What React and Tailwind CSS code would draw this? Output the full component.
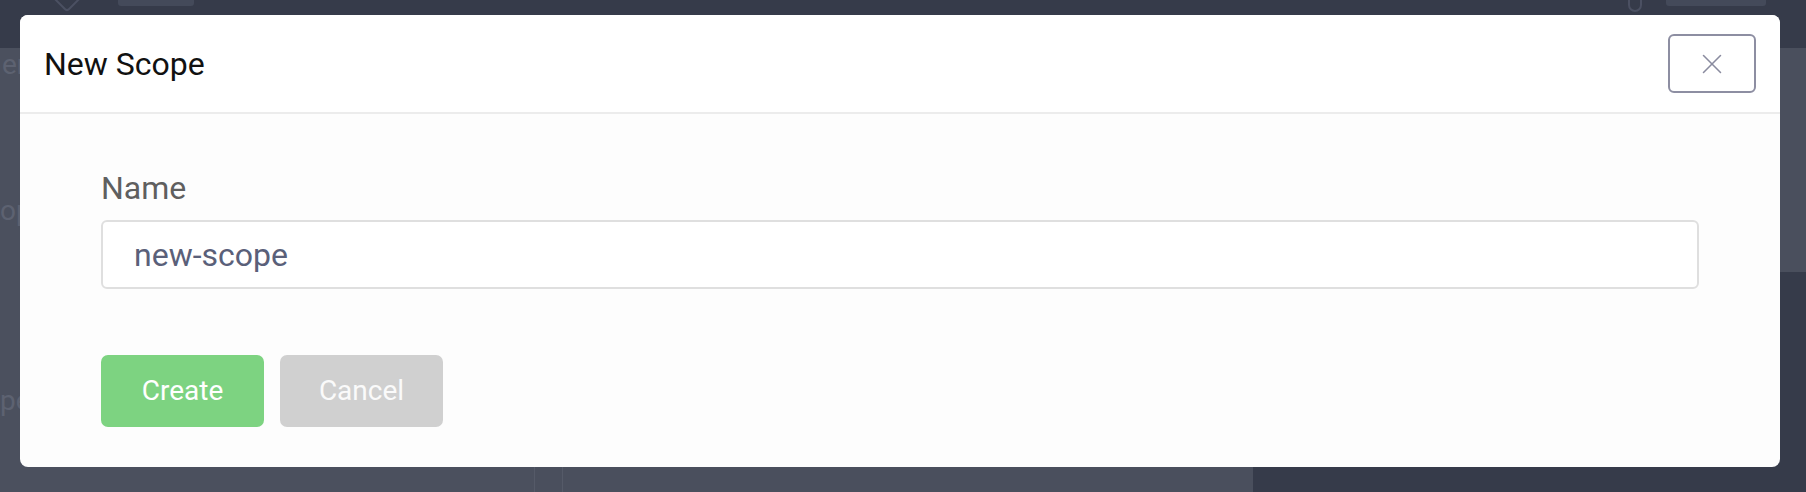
import { X } from 'lucide-react';

const font = { fontFamily: 'Roboto, "Noto Sans", sans-serif' };

const Backdrop = () => (
  <div className="flex h-full w-full flex-col">
    {/* top bar of the page behind, dimmed by the overlay */}
    <div className="flex h-[48px] items-start justify-between bg-[#363b4a] pl-[56px] pr-[40px]">
      <div className="flex items-start gap-[40px]">
        <span className="-mt-[14px] inline-block h-[22px] w-[22px] rotate-45 rounded-[4px] border-2 border-[#4b5062]" />
        <span className="inline-block h-[6px] w-[76px] rounded-b-[3px] bg-[#444a5a]" />
      </div>
      <div className="flex items-start gap-[24px]">
        <span className="-mt-[12px] inline-block h-[24px] w-[14px] rounded-full border-2 border-[#4b5062]" />
        <span className="inline-block h-[6px] w-[100px] rounded-b-[3px] bg-[#444a5a]" />
      </div>
    </div>
    <div className="flex flex-1">
      <div className="flex w-[534px] flex-col bg-[#4b505e] text-[28px] text-[#5d6271]">
        <span className="mt-[2px] pl-[2px] leading-[30px]">er</span>
        <span className="mt-[116px] leading-[30px]">op</span>
        <span className="mt-[160px] leading-[30px]">pe</span>
      </div>
      <div className="w-[29px] border-x border-[#555a68] bg-[#4a4f5d]" />
      <div className="flex-1 bg-[#4a4f5d]" />
      <div className="flex w-[553px] flex-col bg-[#4a4f5d]">
        <div className="h-[224px]" />
        <div className="flex-1 bg-[#363b4a]" />
      </div>
    </div>
  </div>
);

const App = () => {
  return (
    <div className="relative h-[492px] w-full overflow-hidden bg-[#4a4f5d]" style={font}>
      <Backdrop />

      {/* Modal */}
      <div className="absolute left-[20px] top-[15px] flex h-[452px] w-[1760px] flex-col overflow-hidden rounded-[8px] bg-[#fdfdfd]">
        <div className="flex h-[99px] items-center justify-between border-b-2 border-[#ececec] bg-white pl-[24px] pr-[24px]">
          <h2 className="text-[32px] leading-[40px] text-[#111111]">New Scope</h2>
          <button className="flex h-[59px] w-[88px] items-center justify-center rounded-[6px] border-2 border-[#8d8ea2] bg-white">
            <X size={34} strokeWidth={1.1} className="text-[#8a8b9f]" />
          </button>
        </div>

        <div className="flex flex-1 flex-col px-[81px] pt-[54px]">
          <label className="text-[32px] leading-[40px] text-[#5f5f5f]">Name</label>
          <div className="mt-[12px] flex h-[69px] items-center rounded-[6px] border-2 border-[#dfdfdf] bg-white pl-[31px] text-[32px] text-[#5a6079]">
            new-scope
          </div>
          <div className="mt-[66px] flex gap-[16px]">
            <button className="h-[72px] w-[163px] rounded-[7px] bg-[#7dd381] text-[28px] text-white">
              Create
            </button>
            <button className="h-[72px] w-[163px] rounded-[7px] bg-[#d0d0d0] text-[28px] text-[#fafafa]">
              Cancel
            </button>
          </div>
        </div>
      </div>
    </div>
  );
};

export default App;
